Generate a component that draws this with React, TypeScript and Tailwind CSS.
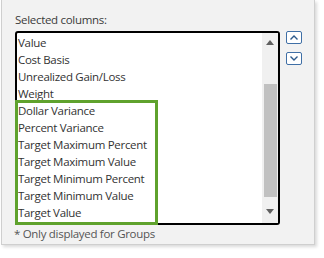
const items = [
  "Value",
  "Cost Basis",
  "Unrealized Gain/Loss",
  "Weight",
  "Dollar Variance",
  "Percent Variance",
  "Target Maximum Percent",
  "Target Maximum Value",
  "Target Minimum Percent",
  "Target Minimum Value",
  "Target Value",
];

const Chevron = ({ up }: { up?: boolean }) => (
  <svg width="10" height="7" viewBox="0 0 10 7" fill="none">
    <path
      d={up ? "M1.5 5.5 L5 2 L8.5 5.5" : "M1.5 1.5 L5 5 L8.5 1.5"}
      stroke="#2d5a8c"
      strokeWidth="1.4"
    />
  </svg>
);

export default function App() {
  return (
    <div className="w-[324px] h-[258px] bg-white font-['Open_Sans',sans-serif] text-[11.5px] tracking-[-0.3px]">
      <div className="ml-[1px] w-[314px] h-[245px] bg-[#f2f2f2] border border-t-0 border-[#cfcfcf] shadow-[2px_2px_3px_rgba(0,0,0,0.15)] pl-[12px] pt-[12px]">
        <div className="text-[#3a3a3a] leading-[16px] pl-[1px]">Selected columns:</div>
        <div className="flex mt-[3px]">
          <div className="relative w-[265px] h-[194px] border-2 border-black rounded-[3px] bg-white ml-[1px] flex">
            <div className="flex-1 flex flex-col pt-[1px] pl-[1px] text-[#333]">
              {items.map((it) => (
                <div key={it} className="h-[17px] leading-[17px] whitespace-nowrap">
                  {it}
                </div>
              ))}
            </div>
            <div className="w-[16px] bg-[#f0f0f0] flex flex-col items-center">
              <div className="h-[16px] flex items-center justify-center pt-[2px]">
                <svg width="8" height="5" viewBox="0 0 8 5">
                  <path d="M0 5 L4 0 L8 5 Z" fill="#606060" />
                </svg>
              </div>
              <div className="mt-[35px] w-[13px] h-[113px] bg-[#c1c1c1]" />
              <div className="flex-1 flex items-center justify-center pt-[2px]">
                <svg width="8" height="5" viewBox="0 0 8 5">
                  <path d="M0 0 L8 0 L4 5 Z" fill="#606060" />
                </svg>
              </div>
            </div>
            <div className="absolute left-[-2px] top-[67px] w-[143px] h-[125px] border-[3px] border-[#5fa22d]" />
          </div>
          <div className="ml-[6px] flex flex-col gap-[8px]">
            <button className="w-[16px] h-[13px] border border-[#3f6fa6] rounded-[2px] bg-white flex items-center justify-center">
              <Chevron up />
            </button>
            <button className="w-[16px] h-[13px] border border-[#3f6fa6] rounded-[2px] bg-white flex items-center justify-center">
              <Chevron />
            </button>
          </div>
        </div>
        <div className="mt-[1px] text-[#555] leading-[16px]">* Only displayed for Groups</div>
      </div>
    </div>
  );
}
